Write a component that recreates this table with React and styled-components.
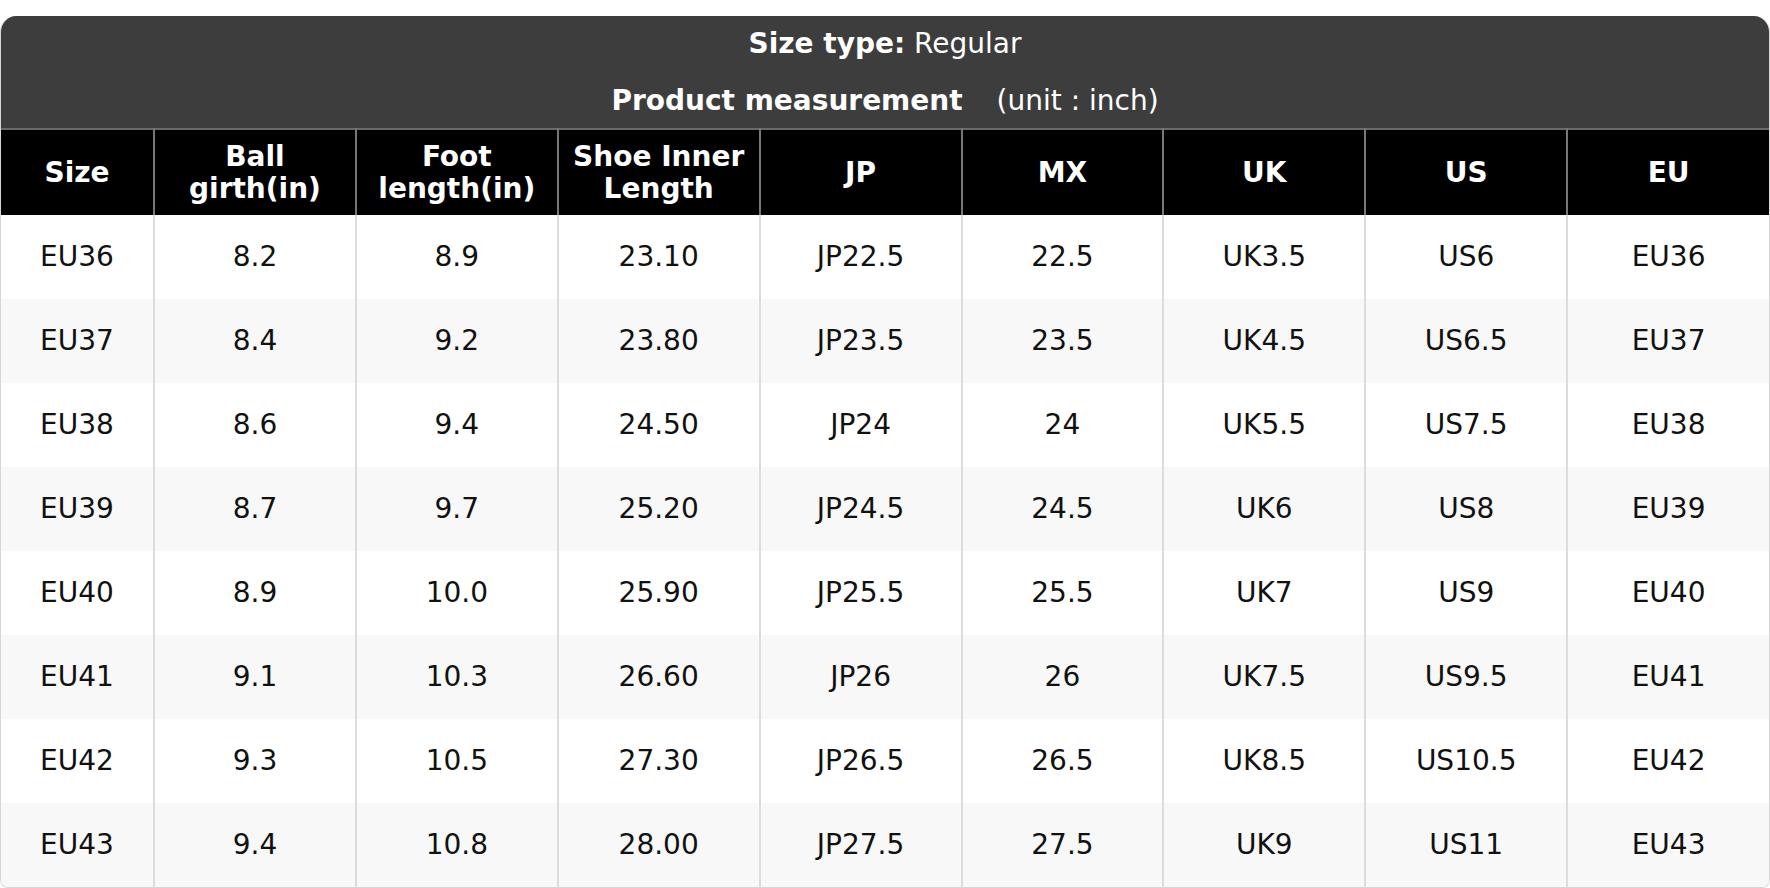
import React from 'react';
import styled, { createGlobalStyle } from 'styled-components';

const GlobalStyle = createGlobalStyle`
  body {
    margin: 0;
    background: #fff;
    font-family: "DejaVu Sans", "Liberation Sans", sans-serif;
  }
`;

const columns = [
  'Size',
  'Ball girth(in)',
  'Foot length(in)',
  'Shoe Inner Length',
  'JP',
  'MX',
  'UK',
  'US',
  'EU',
];

const rows = [
  ['EU36', '8.2', '8.9', '23.10', 'JP22.5', '22.5', 'UK3.5', 'US6', 'EU36'],
  ['EU37', '8.4', '9.2', '23.80', 'JP23.5', '23.5', 'UK4.5', 'US6.5', 'EU37'],
  ['EU38', '8.6', '9.4', '24.50', 'JP24', '24', 'UK5.5', 'US7.5', 'EU38'],
  ['EU39', '8.7', '9.7', '25.20', 'JP24.5', '24.5', 'UK6', 'US8', 'EU39'],
  ['EU40', '8.9', '10.0', '25.90', 'JP25.5', '25.5', 'UK7', 'US9', 'EU40'],
  ['EU41', '9.1', '10.3', '26.60', 'JP26', '26', 'UK7.5', 'US9.5', 'EU41'],
  ['EU42', '9.3', '10.5', '27.30', 'JP26.5', '26.5', 'UK8.5', 'US10.5', 'EU42'],
  ['EU43', '9.4', '10.8', '28.00', 'JP27.5', '27.5', 'UK9', 'US11', 'EU43'],
];

const headerLines = {
  'Ball girth(in)': ['Ball', 'girth(in)'],
  'Foot length(in)': ['Foot', 'length(in)'],
  'Shoe Inner Length': ['Shoe Inner', 'Length'],
};

const App = () => {
  return (
    <Page>
      <GlobalStyle />
      <Card>
        <TitleBar>
          <TitleLine>
            <strong>Size type:</strong> Regular
          </TitleLine>
          <TitleLine>
            <strong>Product measurement</strong>
            <Unit>(unit : inch)</Unit>
          </TitleLine>
        </TitleBar>
        <Table>
          <colgroup>
            <col style={{ width: '153px' }} />
            {columns.slice(1).map((c) => (
              <col key={c} />
            ))}
          </colgroup>
          <thead>
            <tr>
              {columns.map((c) => (
                <HeadCell key={c}>
                  {headerLines[c]
                    ? headerLines[c].map((l) => <div key={l}>{l}</div>)
                    : c}
                </HeadCell>
              ))}
            </tr>
          </thead>
          <tbody>
            {rows.map((r, i) => (
              <Row key={r[0]} striped={i % 2 === 1}>
                {r.map((v, j) => (
                  <Cell key={j}>{v}</Cell>
                ))}
              </Row>
            ))}
          </tbody>
        </Table>
      </Card>
    </Page>
  );
};

export default App;

const Page = styled.div`
  padding-top: 16px;
  width: 1770px;
`;

const Card = styled.div`
  border: 1px solid #d6d6d6;
  border-top: none;
  border-radius: 16px 16px 8px 8px;
  overflow: hidden;
  background: #fff;
`;

const TitleBar = styled.div`
  background: #3d3d3d;
  color: #fff;
  padding: 12px 0 11px;
  display: flex;
  flex-direction: column;
  gap: 25px;
  align-items: center;
  font-size: 28px;
  line-height: 32px;
`;

const TitleLine = styled.div`
  text-align: center;
  white-space: pre;
`;

const Unit = styled.span`
  margin-left: 34px;
`;

const Table = styled.table`
  width: 100%;
  border-collapse: collapse;
  table-layout: fixed;
  font-size: 28px;
`;

const HeadCell = styled.th`
  background: #000;
  color: #fff;
  font-weight: bold;
  height: 86px;
  padding: 0 6px;
  line-height: 32px;
  text-align: center;
  vertical-align: middle;
  border-top: 2px solid #6a6a6a;
  border-right: 2px solid #777;
  box-sizing: border-box;
  &:last-child {
    border-right: none;
  }
`;

const Row = styled.tr`
  background: ${({ striped }) => (striped ? '#f8f8f8' : '#fff')};
`;

const Cell = styled.td`
  height: 84px;
  padding: 0 6px 2px;
  text-align: center;
  vertical-align: middle;
  color: #111;
  border-right: 2px solid #dcdcdc;
  box-sizing: border-box;
  &:last-child {
    border-right: none;
  }
`;
